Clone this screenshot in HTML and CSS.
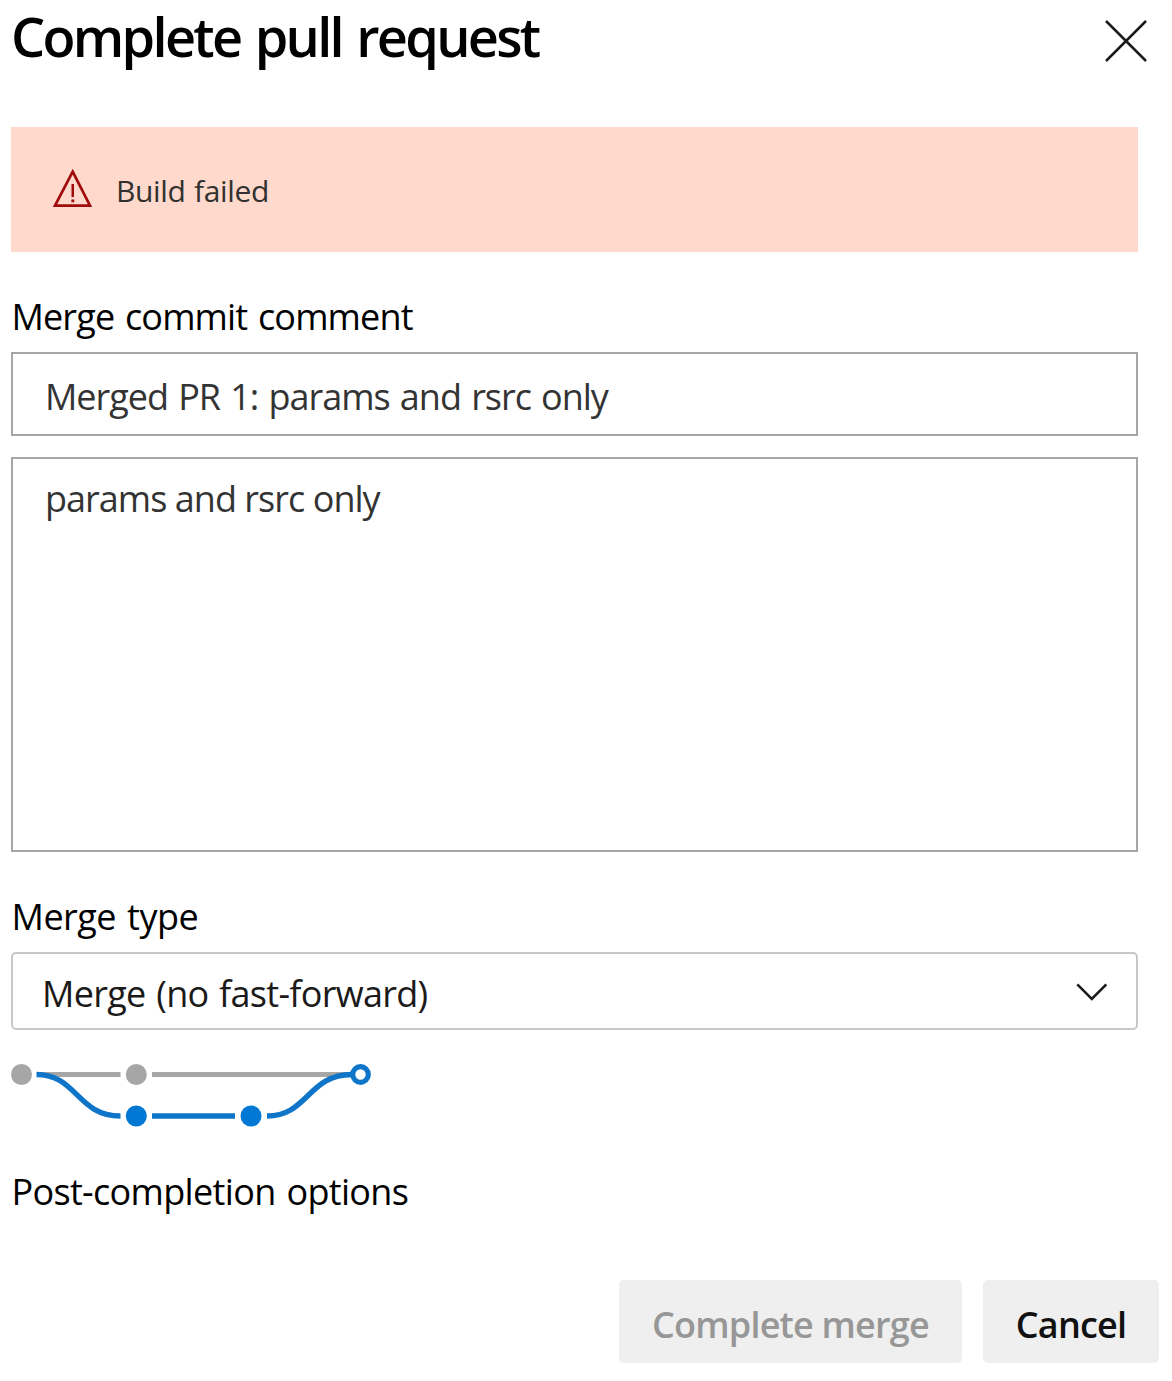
FILE: index.html
```html
<!DOCTYPE html>
<html lang="en">
<head>
<meta charset="utf-8">
<title>Complete pull request</title>
<link rel="stylesheet" href="styles.css">
</head>
<body>
<main class="dialog">
  <header class="header">
    <h1 class="title">Complete pull request</h1>
    <button class="close" aria-label="Close">
      <svg width="42" height="42" viewBox="0 0 42 42" fill="none" stroke="#1b1a19" stroke-width="2.5"><path d="M1 1L41 41M41 1L1 41"/></svg>
    </button>
  </header>
  <div class="alert">
    <svg class="alert-icon" width="40" height="40" viewBox="0 0 40 40"><path d="M19.700 3.700L37 37.700H2Z" fill="none" stroke="#a00b0b" stroke-width="2.7"/><path d="M18.500 16h2.500v13h-2.500zM18.400 31.400h2.800v2.800h-2.800z" fill="#a00b0b"/></svg>
    <span class="alert-text">Build failed</span>
  </div>
  <label class="label label-comment" for="subject">Merge commit comment</label>
  <input class="field subject" id="subject" value="Merged PR 1: params and rsrc only">
  <textarea class="field body-text" aria-label="Description">params and rsrc only</textarea>
  <label class="label label-type">Merge type</label>
  <div class="select">
    <span class="select-text">Merge (no fast-forward)</span>
    <svg class="chevron" width="32" height="18" viewBox="0 0 32 18" fill="none" stroke="#1b1a19" stroke-width="2.6"><path d="M1.3 1.3L15.8 15.8L30.3 1.3"/></svg>
  </div>
  <svg class="graph" width="362" height="66" viewBox="0 0 362 66" fill="none">
    <path d="M26 11.5H109.500M141 11.500H340" stroke="#a6a6a6" stroke-width="5"/>
    <path d="M25.500 11.500C66 11.500 66 53 109.500 53M141 53H224M256 53C297 53 297 11.500 341 11.500" stroke="#0f75c8" stroke-width="5.400"/>
    <circle cx="10.500" cy="11.500" r="10.500" fill="#a6a6a6"/>
    <circle cx="125.300" cy="11.500" r="10.500" fill="#a6a6a6"/>
    <circle cx="125.300" cy="53" r="10.500" fill="#0078d4"/>
    <circle cx="240" cy="53" r="10.500" fill="#0078d4"/>
    <circle cx="349.500" cy="11.500" r="7.800" fill="#fff" stroke="#0f75c8" stroke-width="5.200"/>
  </svg>
  <h2 class="label label-options">Post-completion options</h2>
  <footer class="actions">
    <button class="button primary" disabled>Complete merge</button>
    <button class="button cancel">Cancel</button>
  </footer>
</main>
</body>
</html>
```
FILE: styles.css
```css
* { box-sizing: border-box; }
body {
  margin: 0;
  background: #fff;
  color: #000;
  font-family: "Segoe UI", "Open Sans", "Noto Sans", sans-serif;
  font-size: 36px;
}
button, input, textarea { font: inherit; }
.dialog {
  width: 1172px;
  height: 1381px;
  padding: 0 34px 0 11px;
  display: flex;
  flex-direction: column;
}
.header {
  display: flex;
  justify-content: space-between;
  align-items: flex-start;
  height: 127px;
  margin-right: -9px;
}
.title {
  margin: -1px 0 0;
  font-size: 54px;
  line-height: 74px;
  font-weight: 600;
  letter-spacing: -2.7px;
  word-spacing: 3px;
  white-space: nowrap;
}
.close {
  display: flex;
  margin: 20px 0 0;
  padding: 0;
  border: 0;
  background: none;
}
.alert {
  display: flex;
  align-items: center;
  gap: 23px;
  height: 125px;
  padding: 0 42px;
  background: #ffd9cc;
}
.alert-icon { margin-top: -4px; }
.alert-text {
  padding-top: 2px;
  color: #323130;
  font-size: 30px;
  line-height: 40px;
  letter-spacing: -0.35px;
  word-spacing: 1px;
}
.label {
  display: block;
  margin: 0;
  padding-left: 0.5px;
  font-size: 36px;
  font-weight: 400;
  line-height: 50px;
  letter-spacing: -0.86px;
  word-spacing: 2.2px;
  white-space: nowrap;
}
.label-comment { margin-top: 40px; }
.field {
  display: block;
  width: 100%;
  margin: 0;
  border: 2px solid #a6a6a6;
  border-radius: 0;
  outline: 0;
  background: #fff;
  color: #333;
}
.subject {
  height: 84px;
  margin-top: 10px;
  padding: 4px 32px 0;
  letter-spacing: -1.02px;
  word-spacing: 1.9px;
}
.body-text {
  height: 395px;
  margin-top: 21px;
  padding: 15px 32px;
  line-height: 50px;
  letter-spacing: -0.97px;
  resize: none;
}
.label-type { margin-top: 40px; letter-spacing: -0.5px; }
.select {
  display: flex;
  align-items: center;
  justify-content: space-between;
  height: 78px;
  margin-top: 10px;
  padding: 2px 28px 0 29px;
  border: 2px solid #c8c8c8;
  border-radius: 5px;
  color: #1b1a19;
}
.select-text {
  padding-top: 2px;
  letter-spacing: -0.7px;
  word-spacing: 2px;
}
.graph { margin-top: 33px; }
.label-options {
  margin-top: 38px;
  letter-spacing: -0.67px;
}
.actions {
  display: flex;
  justify-content: flex-end;
  gap: 21px;
  margin: 63px -21px 0 0;
}
.button {
  height: 83px;
  padding: 5px 0 0;
  border: 0;
  border-radius: 5px;
  background: #efefef;
  color: #111;
  font-weight: 600;
  letter-spacing: -0.8px;
  white-space: nowrap;
}
.primary { width: 343px; color: #979797; }
.cancel { width: 176px; }
```
